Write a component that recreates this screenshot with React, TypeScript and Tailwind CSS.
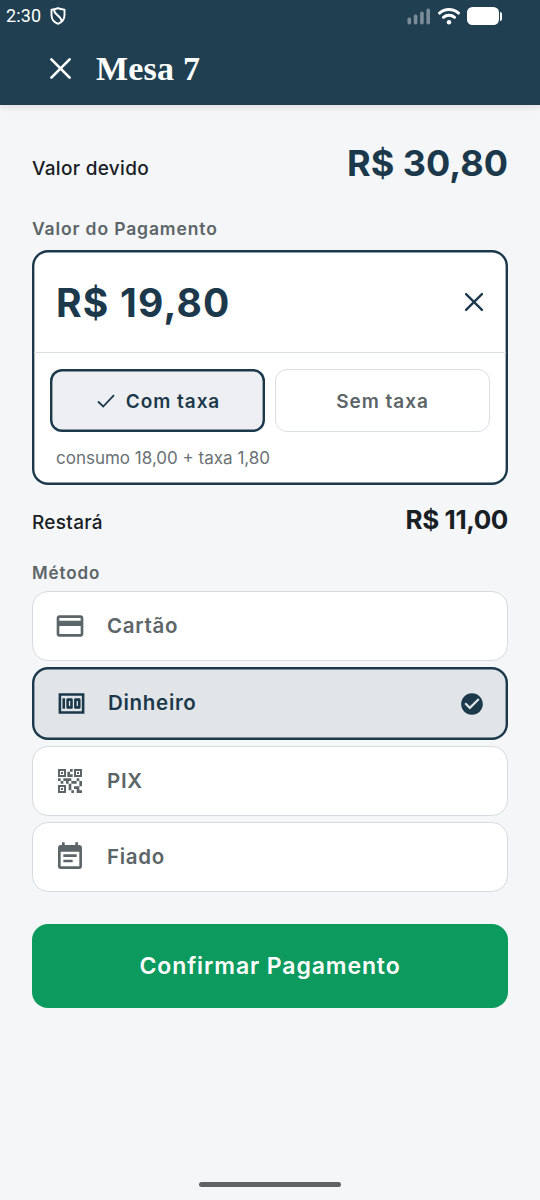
import type { ReactNode } from "react";
import { MdCheckCircle, MdCreditCard, MdEventNote, MdMoney, MdQrCode2 } from "react-icons/md";

type Method = { key: string; label: string; icon: ReactNode };

const methods: Method[] = [
  { key: "card", label: "Cartão", icon: <MdCreditCard className="size-8" /> },
  { key: "cash", label: "Dinheiro", icon: <MdMoney className="size-[31px]" /> },
  { key: "pix", label: "PIX", icon: <MdQrCode2 className="size-8" /> },
  { key: "tab", label: "Fiado", icon: <MdEventNote className="size-8" /> },
];

function CloseIcon({ className }: { className: string }) {
  return (
    <svg viewBox="0 0 24 24" fill="none" stroke="currentColor" strokeLinecap="round" className={className}>
      <path d="M2.5 2.5 21.5 21.5M21.5 2.5 2.5 21.5" />
    </svg>
  );
}

function StatusBar() {
  return (
    <div className="flex h-8 items-center pl-[6px] pr-[38px] text-white">
      <span className="font-[Roboto] text-[18px] leading-8 tracking-[0.1px]">2:30</span>
      <svg viewBox="0 0 16 18" fill="none" stroke="currentColor" strokeWidth="1.9" className="ml-[9px] h-[18px] w-4">
        <path d="M8 1.2 C6 2.2 3.6 2.4 1.5 2.6 V8 C1.5 12.4 4 15.3 8 16.8 C12 15.3 14.5 12.4 14.5 8 V2.6 C12.4 2.4 10 2.2 8 1.2Z" strokeLinejoin="round" />
        <path d="M4 2.6 C4 8.6 11 8 11.6 14.2" />
      </svg>
      <svg viewBox="0 0 24 17" fill="currentColor" className="ml-auto h-[17px] w-6 opacity-40">
        <rect x="0.5" y="9.5" width="3.6" height="7" rx="1.7" />
        <rect x="6.8" y="6.5" width="3.6" height="10" rx="1.7" />
        <rect x="13.1" y="3.5" width="3.6" height="13" rx="1.7" />
        <rect x="19.4" y="0.5" width="3.6" height="16" rx="1.7" />
      </svg>
      <svg viewBox="0 0 22 17" fill="none" stroke="currentColor" strokeWidth="2.9" strokeLinecap="round" className="ml-[7px] h-[17px] w-[22px]">
        <path d="M1.5 5.1 C7 .3 15 .3 20.5 5.1" />
        <path d="M5.4 9.3 C8.5 6.6 13.5 6.6 16.6 9.3" />
        <circle cx="11" cy="14.2" r="2.2" fill="currentColor" stroke="none" />
      </svg>
      <div className="ml-[7px] h-[18px] w-8 rounded-[5.5px] bg-white" />
      <div className="ml-px h-[9px] w-[2.5px] rounded-r-[2px] bg-white" />
    </div>
  );
}

function MethodRow({ method, selected }: { method: Method; selected: boolean }) {
  return (
    <button
      className={
        selected
          ? "flex h-[73px] w-full items-center rounded-[16px] bg-[#e1e5e8] pl-[23px] pr-[23.5px] text-[#1c394b] shadow-[inset_0_0_0_2.4px_#1c394b]"
          : "flex h-[70px] w-full items-center rounded-[16px] border border-[#d5dcdf] bg-white px-[21px] text-[#5c6567]"
      }
    >
      <span className="flex w-8 justify-center">{method.icon}</span>
      <span className="ml-[21px] text-[20.5px] font-semibold tracking-[0.7px]">{method.label}</span>
      {selected && <MdCheckCircle className="ml-auto size-[26px]" />}
    </button>
  );
}

export default function App() {
  return (
    <div className="flex h-[1200px] w-[540px] flex-col overflow-hidden bg-[#f4f6f8] font-['Inter','Noto_Sans',sans-serif] text-[#182024]">
      <header className="h-[105px] bg-[#204052] shadow-[0_1px_8px_rgba(40,35,20,0.14)]">
        <StatusBar />
        <div className="flex h-[73px] items-center pl-[49px] text-white">
          <CloseIcon className="size-[23px] stroke-[2.8]" />
          <h1 className="ml-[24px] font-['Liberation_Serif',serif] text-[34px] font-bold leading-10 tracking-[0.2px]">Mesa 7</h1>
        </div>
      </header>

      <main className="px-8 pt-10">
        <div className="flex h-9 items-end justify-between">
          <span className="text-[19px] font-medium leading-[25px] tracking-[0.3px]">Valor devido</span>
          <span className="text-[36px] font-bold leading-[35px] text-[#1c394b]">R$ 30,80</span>
        </div>

        <p className="mt-[38px] text-[17.5px] font-semibold leading-5 tracking-[0.87px] text-[#5c6567]">Valor do Pagamento</p>
        <section className="mt-[11px] h-[235px] rounded-[16px] bg-white shadow-[inset_0_0_0_2.4px_#1c394b]">
          <div className="mx-[2px] flex h-[103px] items-center justify-between border-b border-[#d9dfe1] pl-[22px] pr-[22px] pt-[2px] text-[#1c394b]">
            <span className="text-[39px] font-bold leading-none tracking-[1.2px]">R$ 19,80</span>
            <CloseIcon className="size-[20px] stroke-[2.8]" />
          </div>
          <div className="grid grid-cols-2 gap-[10px] px-[18px] pt-4 text-[19px] font-semibold tracking-[0.95px]">
            <button className="flex h-[63px] items-center justify-center rounded-[12px] bg-[#edeff2] pl-[2px] text-[#1c394b] shadow-[inset_0_0_0_2.4px_#1c394b]">
              <svg viewBox="0 0 18 14" fill="none" stroke="currentColor" strokeWidth="1.8" className="mr-[11px] h-[14px] w-[18px]">
                <path d="M1 7.5 6.2 12.5 17 1.2" />
              </svg>
              <span className="pt-[3px]">Com taxa</span>
            </button>
            <button className="flex h-[63px] items-center justify-center rounded-[12px] border border-[#d9dfe1] pt-[3px] text-[#5c6567]">
              Sem taxa
            </button>
          </div>
          <p className="mt-4 pl-6 text-[17px] leading-5 text-[#697174]">consumo 18,00 + taxa 1,80</p>
        </section>

        <div className="mt-5 flex h-[30px] justify-between">
          <span className="text-[19px] font-medium leading-[35px] tracking-[0.3px]">Restará</span>
          <span className="text-[26px] font-bold leading-[30px] tracking-[-0.4px]">R$ 11,00</span>
        </div>

        <p className="mt-7 text-[17px] font-semibold leading-5 tracking-[0.9px] text-[#5c6567]">Método</p>
        <div className="mt-2 space-y-[6px]">
          {methods.map((m) => (
            <MethodRow key={m.key} method={m} selected={m.key === "cash"} />
          ))}
        </div>

        <button className="mt-8 h-[84px] w-full rounded-[16px] bg-[#0c9a5e] text-[23px] font-semibold tracking-[0.9px] text-white">
          Confirmar Pagamento
        </button>
      </main>

      <div className="mx-auto mb-[13px] mt-auto h-[5px] w-[142px] rounded-full bg-[#606264]" />
    </div>
  );
}
